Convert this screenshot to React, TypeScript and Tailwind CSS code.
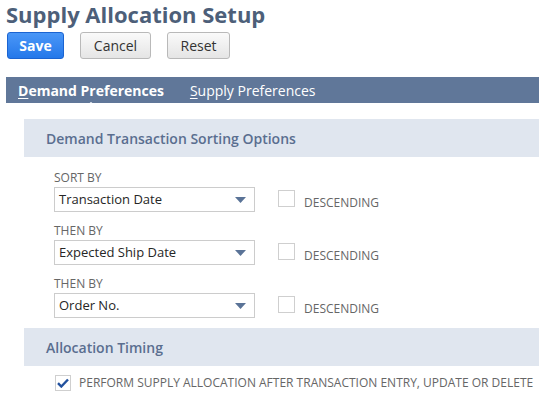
import React from 'react';

function SortRow({ label, value }: { label: string; value: string }) {
  return (
    <div className="flex flex-col">
      <span className="text-[12px] leading-[14px] text-[#666] uppercase">{label}</span>
      <div className="flex items-start mt-[2px]">
        <div className="w-[201px] h-[25px] border border-[#cccccc] bg-white flex items-center justify-between pl-[4px] pr-[8px]">
          <span className="text-[13px] text-[#262626]">{value}</span>
          {/* caret */}
          <svg width="11" height="6" viewBox="0 0 11 6">
            <path d="M0 0 H11 L5.5 6 Z" fill="#5a7397" />
          </svg>
        </div>
        <div className="ml-[23px] mt-[3px] w-[17px] h-[17px] border border-[#cfcfcf] bg-white" />
        <span className="ml-[9px] mt-[9px] text-[12px] leading-[14px] text-[#666]">DESCENDING</span>
      </div>
    </div>
  );
}

export default function App() {
  return (
    <div className="w-[539px] h-[403px] overflow-hidden bg-white font-['Open_Sans',sans-serif]">
      {/* Title */}
      <h1 className="pl-[6px] text-[22px] leading-[28px] font-bold text-[#4d5f79]">
        Supply Allocation Setup
      </h1>

      {/* Buttons */}
      <div className="flex gap-[16px] pl-[7px] mt-[4px]">
        <button className="h-[27px] w-[57px] rounded-[3px] border border-[#1b64d1] bg-gradient-to-b from-[#4a97f7] to-[#2478ea] text-white text-[14px] font-bold">
          Save
        </button>
        <button className="h-[27px] w-[71px] rounded-[3px] border border-[#b9b9b9] bg-gradient-to-b from-[#fafafa] to-[#e5e5e5] text-[#333] text-[14px]">
          Cancel
        </button>
        <button className="h-[27px] w-[63px] rounded-[3px] border border-[#b9b9b9] bg-gradient-to-b from-[#fafafa] to-[#e5e5e5] text-[#333] text-[14px]">
          Reset
        </button>
      </div>

      {/* Tabs */}
      <div className="relative ml-[6px] mt-[18px] h-[26px] bg-[#607799] flex items-center gap-[26px] pl-[12px]">
        <span className="relative text-[14px] font-bold text-white">
          <span className="underline underline-offset-2">D</span>emand Preferences
          <span className="absolute left-1/2 -translate-x-1/2 bottom-[-6px] w-0 h-0 border-l-[7px] border-r-[7px] border-b-[5px] border-l-transparent border-r-transparent border-b-white" />
        </span>
        <span className="text-[14px] text-white">
          <span className="underline underline-offset-2">S</span>upply Preferences
        </span>
      </div>

      {/* Section: sorting */}
      <div className="ml-[24px] mt-[16px] h-[38px] bg-[#e0e6ef] flex items-center pl-[22px]">
        <span className="text-[14px] font-semibold text-[#5a6e8f]">Demand Transaction Sorting Options</span>
      </div>

      <div className="pl-[54px] pt-[14px] flex flex-col gap-[12px]">
        <SortRow label="Sort By" value="Transaction Date" />
        <SortRow label="Then By" value="Expected Ship Date" />
        <SortRow label="Then By" value="Order No." />
      </div>

      {/* Section: timing */}
      <div className="ml-[24px] mt-[10px] h-[38px] bg-[#e0e6ef] flex items-center pl-[22px]">
        <span className="text-[14px] font-semibold text-[#5a6e8f]">Allocation Timing</span>
      </div>

      <div className="flex items-center pl-[55px] mt-[8px]">
        <div className="w-[16px] h-[16px] border border-[#cfcfcf] bg-white flex items-center justify-center">
          <svg width="12" height="10" viewBox="0 0 12 10">
            <path d="M1 5.2 L4.3 8.5 L11 1.5" stroke="#22519e" strokeWidth="2.4" fill="none" />
          </svg>
        </div>
        <span className="ml-[8px] text-[12px] text-[#666]">PERFORM SUPPLY ALLOCATION AFTER TRANSACTION ENTRY, UPDATE OR DELETE</span>
      </div>
    </div>
  );
}
